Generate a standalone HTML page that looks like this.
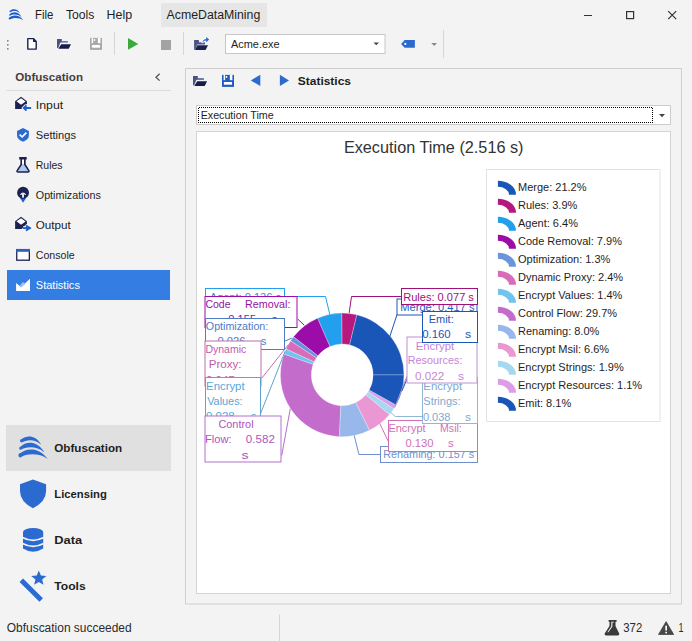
<!DOCTYPE html>
<html><head><meta charset="utf-8"><style>
html,body{margin:0;padding:0;background:#f3f3f3;width:692px;height:641px;overflow:hidden}
svg{display:block;font-family:"Liberation Sans",sans-serif}
</style></head><body>
<svg width="692" height="641" viewBox="0 0 692 641">
<rect x="0" y="0" width="692" height="641" fill="#f3f3f3"/>
<g transform="translate(8.7,9) scale(0.497,0.49) translate(-18.4,-436)"><path d="M21.8,439 C26,436 35,434 41.2,444.8 C35,438.6 26,439.6 21.8,442.6 A1.8,1.8 0 0 1 21.8,439 Z M20.85,446.5 C25.5,441.7 37,439.7 44.5,452.5 C37,445.5 25.5,446.5 20.85,449.8 A1.65,1.65 0 0 1 20.85,446.5 Z M20.65,453 C26,448.3 39,446.3 47.8,459.1 C39,452.5 26,453.5 20.65,457.5 A2.25,2.25 0 0 1 20.65,453 Z" fill="#1f5cc8"/></g>
<text x="35.00" y="18.70" font-size="12" fill="#1e1e1e" textLength="18.40" lengthAdjust="spacingAndGlyphs">File</text>
<text x="66.00" y="18.70" font-size="12" fill="#1e1e1e" textLength="28.40" lengthAdjust="spacingAndGlyphs">Tools</text>
<text x="106.60" y="18.70" font-size="12" fill="#1e1e1e" textLength="25.60" lengthAdjust="spacingAndGlyphs">Help</text>
<rect x="161" y="3" width="106" height="24" fill="#e6e6e6"/>
<text x="166.60" y="19.20" font-size="12" fill="#1e1e1e" textLength="93.70" lengthAdjust="spacingAndGlyphs">AcmeDataMining</text>
<line x1="584" y1="15.5" x2="592" y2="15.5" stroke="#333" stroke-width="1"/>
<rect x="626.6" y="11.6" width="7" height="7" fill="none" stroke="#333" stroke-width="1.2"/>
<path d="M668.2,11.2 L676.2,19.2 M676.2,11.2 L668.2,19.2" fill="none" stroke="#333" stroke-width="1.2"/>
<rect x="7" y="40" width="1.6" height="1.6" fill="#8a8a8a"/>
<rect x="7" y="44" width="1.6" height="1.6" fill="#8a8a8a"/>
<rect x="7" y="48" width="1.6" height="1.6" fill="#8a8a8a"/>
<path d="M27.8,38.6 L33.4,38.6 L36.2,41.6 L36.2,49.1 L27.8,49.1 Z" fill="#ffffff" stroke="#1b2250" stroke-width="1.4" stroke-linejoin="round"/>
<path d="M33,38.2 L33,41.9 L36.6,41.9 Z" fill="#1b2250"/>
<path d="M57,38.9 L61.8,38.9 L61.8,41.2 L67.9,41.2 L67.9,42.6 L60.4,42.6 L58.2,48.1 L57,48.1 Z" fill="#4b5385"/>
<path d="M61.2,44.2 L71.05,44.2 L68.7,48.8 L58.3,48.8 Z" fill="#141c4c"/>
<rect x="90" y="37.9" width="12" height="12" fill="#a9a9a9"/>
<rect x="91.6" y="37.9" width="1.5" height="5.3" fill="#ffffff"/>
<rect x="97.85" y="37.9" width="2.55" height="5.3" fill="#ffffff"/>
<rect x="93.8" y="39" width="1.4" height="1.9" fill="#ffffff"/>
<rect x="91.9" y="45" width="8.1" height="2.7" fill="#ffffff"/>
<line x1="114.5" y1="32" x2="114.5" y2="55" stroke="#d6d6d6" stroke-width="1"/>
<path d="M128,38 L138.3,43.9 L128,49.8 Z" fill="#3aab3a"/>
<rect x="161" y="40" width="10" height="10" fill="#a3a3a3"/>
<line x1="183.5" y1="32" x2="183.5" y2="55" stroke="#d6d6d6" stroke-width="1"/>
<path d="M194.1,40 L198.9,40 L198.9,42.3 L204.9,42.3 L204.9,44.6 L197.2,44.6 L195.2,49.8 L194.1,49.8 Z" fill="#4b5385"/>
<path d="M197.4,45.2 L208,45.2 L205.6,49.9 L195,49.9 Z" fill="#1b2250"/>
<path d="M202.2,42.5 Q203.2,39.2 206.2,39 L206.2,36.8 L209.2,39.6 L206.2,42.4 L206.2,40.6 Q204,40.6 202.2,42.5 Z" fill="none" stroke="#ffffff" stroke-width="1.6" stroke-linejoin="round" stroke-opacity="0.9"/>
<path d="M202.2,42.5 Q203.2,39.2 206.2,39 L206.2,36.8 L209.2,39.6 L206.2,42.4 L206.2,40.6 Q204,40.6 202.2,42.5 Z" fill="#2b6bd0"/>
<rect x="225.5" y="34.5" width="159.5" height="19" fill="#ffffff" stroke="#c7c7c7" stroke-width="1"/>
<text x="231.00" y="48.30" font-size="11.5" fill="#1e1e1e" textLength="48.60" lengthAdjust="spacingAndGlyphs">Acme.exe</text>
<path d="M373.5,42.5 L379,42.5 L376.25,45.3 Z" fill="#444"/>
<path d="M404.6,40.1 L414.9,40.1 L414.9,47.7 L404.6,47.7 L401.1,43.9 Z" fill="#2b6bd0"/>
<circle cx="405.3" cy="43.9" r="1.1" fill="#fff"/>
<path d="M431.2,43 L437,43 L434.1,46 Z" fill="#8a8a8a"/>
<line x1="443.5" y1="30" x2="443.5" y2="58" stroke="#d6d6d6" stroke-width="1"/>
<text x="15.30" y="81.40" font-size="11" font-weight="700" fill="#463e3e" textLength="67.70" lengthAdjust="spacingAndGlyphs">Obfuscation</text>
<path d="M159.6,73.8 L156,77.2 L159.6,80.6" fill="none" stroke="#555" stroke-width="1.3"/>
<line x1="6" y1="90.5" x2="171" y2="90.5" stroke="#dcdcdc" stroke-width="1"/>
<text x="35.80" y="108.90" font-size="11" fill="#1e1e1e" textLength="27.40" lengthAdjust="spacingAndGlyphs">Input</text>
<text x="35.80" y="138.70" font-size="11" fill="#1e1e1e" textLength="40.20" lengthAdjust="spacingAndGlyphs">Settings</text>
<text x="35.80" y="168.90" font-size="11" fill="#1e1e1e" textLength="26.80" lengthAdjust="spacingAndGlyphs">Rules</text>
<text x="35.80" y="198.90" font-size="11" fill="#1e1e1e" textLength="65.00" lengthAdjust="spacingAndGlyphs">Optimizations</text>
<text x="35.80" y="228.90" font-size="11" fill="#1e1e1e" textLength="35.00" lengthAdjust="spacingAndGlyphs">Output</text>
<text x="35.80" y="258.80" font-size="11" fill="#1e1e1e" textLength="38.90" lengthAdjust="spacingAndGlyphs">Console</text>
<rect x="7" y="270" width="163" height="30" fill="#347de2"/>
<text x="35.80" y="288.80" font-size="11" fill="#ffffff" textLength="44.10" lengthAdjust="spacingAndGlyphs">Statistics</text>
<path d="M21.06,96.8 L26.9,101.3 L26.9,103.6 L21.7,108.9 L15.1,108.9 L15.1,101.2 Z" fill="#1b2250"/>
<path d="M21.06,98.3 L25.6,101.5 L21.06,104.7 L16.5,101.35 Z" fill="#fff"/>
<path d="M26.5,105.3 L23.8,108 L26.5,110.7 M24.2,108 L31.1,108" fill="none" stroke="#ffffff" stroke-width="3.6" stroke-opacity="0.9"/>
<path d="M26.5,105.3 L23.8,108 L26.5,110.7 M24.2,108 L31.1,108" fill="none" stroke="#1f5ccc" stroke-width="1.9"/>
<path d="M23,128.1 L28.9,131.1 L28.9,135.6 Q28.9,139.6 23,141.8 Q17.06,139.6 17.06,135.6 L17.06,131.1 Z" fill="#2b6bd0"/>
<path d="M19.6,134.7 L22.1,136.8 L26.4,132.6" fill="none" stroke="#fff" stroke-width="1.7"/>
<path d="M19.2,157.1 L26.7,157.1 L26.7,159.5 L25.7,159.5 L25.7,164.3 L29.6,170.6 Q30.3,172.7 28,172.7 L18,172.7 Q15.7,172.7 16.4,170.6 L20.4,164.3 L20.4,159.5 L19.2,159.5 Z" fill="#1b2250"/>
<rect x="22.0" y="159.5" width="2.0" height="5.2" fill="#ffffff"/>
<path d="M22.0,164.7 L24.0,164.7 L28.3,171.3 L17.7,171.3 Z" fill="#b2c7f0"/>
<path d="M20,198 L26.1,198 L23.05,202.8 Z" fill="#2060d0"/>
<circle cx="23.05" cy="192.8" r="5.95" fill="#1b2250"/>
<path d="M19.9,194.7 Q23.05,190.2 26.3,194.7 L25.0,195.0 Q23.05,193.2 21.2,195.0 Z" fill="#e4e4ec"/>
<rect x="22.0" y="193.0" width="2.0" height="4.6" fill="#e4e4ec"/>
<path d="M21.06,216.8 L26.9,221.3 L26.9,223.6 L21.7,228.9 L15.1,228.9 L15.1,221.2 Z" fill="#1b2250"/>
<path d="M21.06,218.3 L25.6,221.5 L21.06,224.7 L16.5,221.35 Z" fill="#fff"/>
<path d="M23,228.1 L29.6,228.1 M26.3,225.3 L30.4,228.1 L26.3,230.9" fill="none" stroke="#ffffff" stroke-width="3.6" stroke-opacity="0.9"/>
<path d="M23,228.1 L29.6,228.1" fill="none" stroke="#1f5ccc" stroke-width="1.9"/>
<path d="M26.3,225.1 L31.2,228.1 L26.3,231.0 Z" fill="#1f5ccc" stroke="#1f5ccc" stroke-width="0.8" stroke-linejoin="round"/>
<rect x="16.75" y="249.6" width="12.6" height="10.6" fill="#ffffff" stroke="#1b2250" stroke-width="1.3"/>
<rect x="16.1" y="249" width="13.9" height="2.8" fill="#2a60c8"/>
<path d="M16.1,283 L21,286.9 L30,278.8 L30,291 L16.1,291 Z" fill="#fff"/>
<path d="M19.6,285.9 L22.8,281.9 L25.3,284.1 L21.2,287.6 Z" fill="#9fc0f0"/>
<rect x="6" y="425" width="165" height="46" fill="#e0e0e0"/>
<text x="54.30" y="452.00" font-size="11" font-weight="700" fill="#1e1e1e" textLength="67.90" lengthAdjust="spacingAndGlyphs">Obfuscation</text>
<text x="54.30" y="497.70" font-size="11" font-weight="700" fill="#1e1e1e" textLength="52.50" lengthAdjust="spacingAndGlyphs">Licensing</text>
<text x="54.30" y="544.00" font-size="11" font-weight="700" fill="#1e1e1e" textLength="27.90" lengthAdjust="spacingAndGlyphs">Data</text>
<text x="54.30" y="589.60" font-size="11" font-weight="700" fill="#1e1e1e" textLength="31.40" lengthAdjust="spacingAndGlyphs">Tools</text>
<path d="M21.8,439 C26,436 35,434 41.2,444.8 C35,438.6 26,439.6 21.8,442.6 A1.8,1.8 0 0 1 21.8,439 Z M20.85,446.5 C25.5,441.7 37,439.7 44.5,452.5 C37,445.5 25.5,446.5 20.85,449.8 A1.65,1.65 0 0 1 20.85,446.5 Z M20.65,453 C26,448.3 39,446.3 47.8,459.1 C39,452.5 26,453.5 20.65,457.5 A2.25,2.25 0 0 1 20.65,453 Z" fill="#2b6bd0"/>
<path d="M32.9,479.4 L46.1,484.3 L46.1,491 Q46.1,501.5 32.9,508.3 Q20,501.5 20,491 L20,484.3 Z" fill="#2b6bd0"/>
<path d="M23,532 A10.1,4 0 0 1 43.2,532 L43.2,548.5 Q33.1,554.9 23,548.5 Z" fill="#2b6bd0"/>
<path d="M22.5,537.5 Q33.1,543.1 43.7,537.5" fill="none" stroke="#f3f3f3" stroke-width="1.7"/>
<path d="M22.5,543.6 Q33.1,549.2 43.7,543.6" fill="none" stroke="#f3f3f3" stroke-width="1.7"/>
<line x1="21.3" y1="580.2" x2="41.2" y2="600.05" stroke="#2b6bd0" stroke-width="5.0"/>
<polygon points="38.80,570.40 40.86,575.57 46.41,575.93 42.13,579.48 43.50,584.87 38.80,581.90 34.10,584.87 35.47,579.48 31.19,575.93 36.74,575.57" fill="#2b6bd0"/>
<text x="6.80" y="631.80" font-size="12" fill="#2a2a2a" textLength="124.80" lengthAdjust="spacingAndGlyphs">Obfuscation succeeded</text>
<line x1="279.5" y1="614.5" x2="279.5" y2="641" stroke="#d6d6d6" stroke-width="1"/>
<path d="M608.6,620 L616.6,620 L616.6,621.7 L615.5,621.7 L615.5,626 L619.2,633.6 Q619.8,635.4 618,635.4 L605.8,635.4 Q604.1,635.4 604.7,633.6 L609.5,626 L609.5,621.7 L608.6,621.7 Z" fill="#3a3a3a"/>
<path d="M611.3,621.7 L613.9,621.7 L613.9,622.5 L612.4,622.5 L612.4,626.6 L608.4,632.2 L607.4,632.2 L611.3,626.2 Z" fill="#f3f3f3"/>
<text x="623.30" y="631.90" font-size="12" fill="#2a2a2a" textLength="18.90" lengthAdjust="spacingAndGlyphs">372</text>
<path d="M666.1,621.6 L673.7,634.5 L658.5,634.5 Z" fill="#474747" stroke="#474747" stroke-width="0.8" stroke-linejoin="round"/>
<rect x="665.3" y="625.7" width="1.7" height="4.8" fill="#fff"/>
<rect x="665.3" y="631.8" width="1.7" height="1.5" fill="#fff"/>
<text x="678.60" y="631.90" font-size="12" fill="#2a2a2a" textLength="5.00" lengthAdjust="spacingAndGlyphs">1</text>
<rect x="185.5" y="68.5" width="496" height="535.5" fill="none" stroke="#cfcfcf" stroke-width="1"/>
<path d="M193,76.0 L197.8,76.0 L197.8,78.30000000000001 L203.9,78.30000000000001 L203.9,79.7 L196.4,79.7 L194.2,85.2 L193,85.2 Z" fill="#4b5385"/>
<path d="M197.2,81.30000000000001 L207.05,81.30000000000001 L204.7,85.9 L194.3,85.9 Z" fill="#141c4c"/>
<rect x="222" y="74.9" width="12" height="12" fill="#1f5cc8"/>
<rect x="223.6" y="74.9" width="1.5" height="5.3" fill="#ffffff"/>
<rect x="229.85" y="74.9" width="2.55" height="5.3" fill="#ffffff"/>
<rect x="225.8" y="76" width="1.4" height="1.9" fill="#ffffff"/>
<rect x="223.9" y="82" width="8.1" height="2.7" fill="#ffffff"/>
<path d="M250.8,80.4 L260.3,74.8 L260.3,85.9 Z" fill="#2b6bd0"/>
<path d="M289,80.4 L279.9,74.8 L279.9,85.9 Z" fill="#2b6bd0"/>
<text x="297.80" y="85.20" font-size="11" font-weight="700" fill="#1e1e1e" textLength="53.20" lengthAdjust="spacingAndGlyphs">Statistics</text>
<rect x="196.5" y="105.5" width="474" height="19" fill="#ffffff" stroke="#cccccc" stroke-width="1"/>
<defs><pattern id="dots" patternUnits="userSpaceOnUse" x="0" y="0" width="2" height="2"><rect x="0" y="0" width="1" height="1" fill="#000"/><rect x="1" y="1" width="1" height="1" fill="#000"/></pattern></defs>
<rect x="198" y="107" width="455" height="1" fill="url(#dots)"/>
<rect x="198" y="122" width="455" height="1" fill="url(#dots)"/>
<rect x="198" y="107" width="1" height="16" fill="url(#dots)"/>
<rect x="652" y="107" width="1" height="16" fill="url(#dots)"/>
<path d="M659,114 L665,114 L662,117.2 Z" fill="#444"/>
<text x="200.70" y="118.60" font-size="11" fill="#1e1e1e" textLength="73.00" lengthAdjust="spacingAndGlyphs">Execution Time</text>
<rect x="196.5" y="131.5" width="474" height="462" fill="#ffffff" stroke="#d4d4d4" stroke-width="1"/>
<text x="343.90" y="153.10" font-size="16" fill="#333333" textLength="179.60" lengthAdjust="spacingAndGlyphs">Execution Time (2.516 s)</text>
<rect x="486.5" y="169.5" width="173.5" height="252" fill="#ffffff" stroke="#e3e3e3" stroke-width="1"/>
<path d="M497.9,180.79999999999998 A18.1,13.9 0 0 1 516.0,194.7 L509.0,194.7 A11.2,7.8 0 0 0 497.9,186.79999999999998 Z" fill="#1a56b8"/>
<text x="518.00" y="191.20" font-size="11" fill="#1e1e1e">Merge: 21.2%</text>
<path d="M497.9,198.79999999999998 A18.1,13.9 0 0 1 516.0,212.7 L509.0,212.7 A11.2,7.8 0 0 0 497.9,204.79999999999998 Z" fill="#b5197f"/>
<text x="518.00" y="209.20" font-size="11" fill="#1e1e1e">Rules: 3.9%</text>
<path d="M497.9,216.79999999999998 A18.1,13.9 0 0 1 516.0,230.7 L509.0,230.7 A11.2,7.8 0 0 0 497.9,222.79999999999998 Z" fill="#22a0ee"/>
<text x="518.00" y="227.20" font-size="11" fill="#1e1e1e">Agent: 6.4%</text>
<path d="M497.9,234.79999999999998 A18.1,13.9 0 0 1 516.0,248.7 L509.0,248.7 A11.2,7.8 0 0 0 497.9,240.79999999999998 Z" fill="#9c0ca8"/>
<text x="518.00" y="245.20" font-size="11" fill="#1e1e1e">Code Removal: 7.9%</text>
<path d="M497.9,252.79999999999998 A18.1,13.9 0 0 1 516.0,266.7 L509.0,266.7 A11.2,7.8 0 0 0 497.9,258.79999999999995 Z" fill="#6a94dc"/>
<text x="518.00" y="263.20" font-size="11" fill="#1e1e1e">Optimization: 1.3%</text>
<path d="M497.9,270.8 A18.1,13.9 0 0 1 516.0,284.7 L509.0,284.7 A11.2,7.8 0 0 0 497.9,276.8 Z" fill="#d86cb8"/>
<text x="518.00" y="281.20" font-size="11" fill="#1e1e1e">Dynamic Proxy: 2.4%</text>
<path d="M497.9,288.8 A18.1,13.9 0 0 1 516.0,302.7 L509.0,302.7 A11.2,7.8 0 0 0 497.9,294.8 Z" fill="#70c4ee"/>
<text x="518.00" y="299.20" font-size="11" fill="#1e1e1e">Encrypt Values: 1.4%</text>
<path d="M497.9,306.8 A18.1,13.9 0 0 1 516.0,320.7 L509.0,320.7 A11.2,7.8 0 0 0 497.9,312.8 Z" fill="#c46ccc"/>
<text x="518.00" y="317.20" font-size="11" fill="#1e1e1e">Control Flow: 29.7%</text>
<path d="M497.9,324.8 A18.1,13.9 0 0 1 516.0,338.7 L509.0,338.7 A11.2,7.8 0 0 0 497.9,330.8 Z" fill="#98b8ec"/>
<text x="518.00" y="335.20" font-size="11" fill="#1e1e1e">Renaming: 8.0%</text>
<path d="M497.9,342.8 A18.1,13.9 0 0 1 516.0,356.7 L509.0,356.7 A11.2,7.8 0 0 0 497.9,348.8 Z" fill="#ea98d4"/>
<text x="518.00" y="353.20" font-size="11" fill="#1e1e1e">Encrypt Msil: 6.6%</text>
<path d="M497.9,360.8 A18.1,13.9 0 0 1 516.0,374.7 L509.0,374.7 A11.2,7.8 0 0 0 497.9,366.8 Z" fill="#a6d8f2"/>
<text x="518.00" y="371.20" font-size="11" fill="#1e1e1e">Encrypt Strings: 1.9%</text>
<path d="M497.9,378.8 A18.1,13.9 0 0 1 516.0,392.7 L509.0,392.7 A11.2,7.8 0 0 0 497.9,384.8 Z" fill="#dc9ce8"/>
<text x="518.00" y="389.20" font-size="11" fill="#1e1e1e">Encrypt Resources: 1.1%</text>
<path d="M497.9,396.8 A18.1,13.9 0 0 1 516.0,410.7 L509.0,410.7 A11.2,7.8 0 0 0 497.9,402.8 Z" fill="#1a56b8"/>
<text x="518.00" y="407.20" font-size="11" fill="#1e1e1e">Emit: 8.1%</text>
<path d="M356.74,314.83 A61.8,61.8 0 0 1 404.00,374.90 L373.10,374.90 A30.9,30.9 0 0 0 349.47,344.87 Z" fill="#1a56b8" stroke="#ffffff" stroke-width="0.6" stroke-opacity="0.45"/>
<path d="M341.71,313.10 A61.8,61.8 0 0 1 356.74,314.83 L349.47,344.87 A30.9,30.9 0 0 0 341.96,344.00 Z" fill="#b5197f" stroke="#ffffff" stroke-width="0.6" stroke-opacity="0.45"/>
<path d="M317.54,318.23 A61.8,61.8 0 0 1 341.71,313.10 L341.96,344.00 A30.9,30.9 0 0 0 329.87,346.57 Z" fill="#22a0ee" stroke="#ffffff" stroke-width="0.6" stroke-opacity="0.45"/>
<path d="M293.51,336.84 A61.8,61.8 0 0 1 317.54,318.23 L329.87,346.57 A30.9,30.9 0 0 0 317.86,355.87 Z" fill="#9c0ca8" stroke="#ffffff" stroke-width="0.6" stroke-opacity="0.45"/>
<path d="M290.57,340.94 A61.8,61.8 0 0 1 293.51,336.84 L317.86,355.87 A30.9,30.9 0 0 0 316.38,357.92 Z" fill="#6a94dc" stroke="#ffffff" stroke-width="0.6" stroke-opacity="0.45"/>
<path d="M286.05,349.09 A61.8,61.8 0 0 1 290.57,340.94 L316.38,357.92 A30.9,30.9 0 0 0 314.12,362.00 Z" fill="#d86cb8" stroke="#ffffff" stroke-width="0.6" stroke-opacity="0.45"/>
<path d="M284.00,354.13 A61.8,61.8 0 0 1 286.05,349.09 L314.12,362.00 A30.9,30.9 0 0 0 313.10,364.51 Z" fill="#70c4ee" stroke="#ffffff" stroke-width="0.6" stroke-opacity="0.45"/>
<path d="M339.38,436.64 A61.8,61.8 0 0 1 284.00,354.13 L313.10,364.51 A30.9,30.9 0 0 0 340.79,405.77 Z" fill="#c46ccc" stroke="#ffffff" stroke-width="0.6" stroke-opacity="0.45"/>
<path d="M369.50,430.34 A61.8,61.8 0 0 1 339.38,436.64 L340.79,405.77 A30.9,30.9 0 0 0 355.85,402.62 Z" fill="#98b8ec" stroke="#ffffff" stroke-width="0.6" stroke-opacity="0.45"/>
<path d="M389.54,414.62 A61.8,61.8 0 0 1 369.50,430.34 L355.85,402.62 A30.9,30.9 0 0 0 365.87,394.76 Z" fill="#ea98d4" stroke="#ffffff" stroke-width="0.6" stroke-opacity="0.45"/>
<path d="M393.94,408.70 A61.8,61.8 0 0 1 389.54,414.62 L365.87,394.76 A30.9,30.9 0 0 0 368.07,391.80 Z" fill="#a6d8f2" stroke="#ffffff" stroke-width="0.6" stroke-opacity="0.45"/>
<path d="M396.15,405.04 A61.8,61.8 0 0 1 393.94,408.70 L368.07,391.80 A30.9,30.9 0 0 0 369.18,389.97 Z" fill="#dc9ce8" stroke="#ffffff" stroke-width="0.6" stroke-opacity="0.45"/>
<path d="M404.00,374.90 A61.8,61.8 0 0 1 396.15,405.04 L369.18,389.97 A30.9,30.9 0 0 0 373.10,374.90 Z" fill="#1a56b8" stroke="#ffffff" stroke-width="0.6" stroke-opacity="0.45"/>
<path d="M389.9,336.3 L397.0,314.6" fill="none" stroke="#1a56b8" stroke-width="1"/>
<path d="M349.2,312.9 L351.5,296.5 L401.1,296.5" fill="none" stroke="#a0107a" stroke-width="1"/>
<path d="M329.7,314.0 L325.5,296.5 L284.6,296.5" fill="none" stroke="#22a0ee" stroke-width="1"/>
<path d="M304.3,325.3 L297.7,319.0" fill="none" stroke="#9c0ca8" stroke-width="1"/>
<path d="M291.8,338.1 L284.7,341.3" fill="none" stroke="#4f7bc6" stroke-width="1"/>
<path d="M288.3,344.7 L261.6,378.4" fill="none" stroke="#c070ae" stroke-width="1"/>
<path d="M285.1,351.3 L260.4,414.0" fill="none" stroke="#5ea4cc" stroke-width="1"/>
<path d="M290.3,408.7 L281.7,455.5" fill="none" stroke="#b070c8" stroke-width="1"/>
<path d="M354.2,435.3 L358.9,454.5 L380.3,454.5" fill="none" stroke="#6f8fcc" stroke-width="1"/>
<path d="M379.8,423.6 L388.4,441.6" fill="none" stroke="#d070b0" stroke-width="1"/>
<path d="M390.8,412.6 L395.3,416.5 L422.3,416.5" fill="none" stroke="#90b8d4" stroke-width="1"/>
<path d="M394.8,407.4 L407.0,376.0" fill="none" stroke="#c090d4" stroke-width="1"/>
<path d="M401.9,391.0 L422.5,342.3" fill="none" stroke="#1a56b8" stroke-width="1"/>
<svg x="396" y="298" width="83" height="19" overflow="hidden"><g transform="translate(-396,-298)">
<rect x="397" y="299" width="80" height="16" fill="#ffffff" stroke="#1a56b8" stroke-width="1"/>
<text x="400.20" y="311.40" font-size="11" fill="#1f5cc0" textLength="74.40" lengthAdjust="spacingAndGlyphs">Merge: 0.417 s</text>
</g></svg>
<svg x="400" y="287" width="79" height="19" overflow="hidden"><g transform="translate(-400,-287)">
<rect x="401.5" y="288.5" width="76.0" height="16.0" fill="#ffffff" stroke="#a0107a" stroke-width="1"/>
<text x="403.20" y="300.50" font-size="11" fill="#a0107a" textLength="70.70" lengthAdjust="spacingAndGlyphs">Rules: 0.077 s</text>
</g></svg>
<svg x="204" y="287" width="82" height="19" overflow="hidden"><g transform="translate(-204,-287)">
<rect x="205.5" y="288.5" width="79.0" height="16.0" fill="#ffffff" stroke="#22a0ee" stroke-width="1"/>
<text x="209.70" y="300.50" font-size="11" fill="#2a8fd6" textLength="71.30" lengthAdjust="spacingAndGlyphs">Agent: 0.136 s</text>
</g></svg>
<svg x="204" y="295" width="95" height="34" overflow="hidden"><g transform="translate(-204,-295)">
<rect x="205" y="296.5" width="92" height="31.0" fill="#ffffff" stroke="#9c0ca8" stroke-width="1"/>
<text x="205.40" y="308.30" font-size="11" fill="#9510a2" textLength="25.20" lengthAdjust="spacingAndGlyphs">Code</text>
<text x="245.10" y="308.30" font-size="11" fill="#9510a2" textLength="45.30" lengthAdjust="spacingAndGlyphs">Removal:</text>
<text x="228.30" y="322.80" font-size="11" fill="#9510a2" textLength="27.90" lengthAdjust="spacingAndGlyphs">0.155</text>
<text x="271.70" y="322.80" font-size="11" fill="#9510a2" textLength="5.40" lengthAdjust="spacingAndGlyphs">s</text>
</g></svg>
<svg x="204" y="317" width="82" height="34" overflow="hidden"><g transform="translate(-204,-317)">
<rect x="205.5" y="318.5" width="79.0" height="31.0" fill="#ffffff" stroke="#4f7bc6" stroke-width="1"/>
<text x="205.80" y="329.90" font-size="11" fill="#4f7bc6" textLength="62.50" lengthAdjust="spacingAndGlyphs">Optimization:</text>
<text x="217.40" y="345.10" font-size="11" fill="#4f7bc6" textLength="28.00" lengthAdjust="spacingAndGlyphs">0.026</text>
<text x="260.80" y="345.10" font-size="11" fill="#4f7bc6" textLength="5.60" lengthAdjust="spacingAndGlyphs">s</text>
</g></svg>
<svg x="204" y="340" width="59" height="48" overflow="hidden"><g transform="translate(-204,-340)">
<rect x="205" y="341" width="56" height="45" fill="#ffffff" stroke="#c070ae" stroke-width="1"/>
<text x="205.40" y="353.20" font-size="11" fill="#c35aa8" textLength="40.90" lengthAdjust="spacingAndGlyphs">Dynamic</text>
<text x="208.70" y="368.40" font-size="11" fill="#c35aa8" textLength="32.90" lengthAdjust="spacingAndGlyphs">Proxy:</text>
<text x="206.10" y="383.70" font-size="11" fill="#c35aa8" textLength="28.50" lengthAdjust="spacingAndGlyphs">0.047</text>
<text x="250.90" y="383.70" font-size="11" fill="#c35aa8" textLength="5.20" lengthAdjust="spacingAndGlyphs">s</text>
</g></svg>
<svg x="204" y="376" width="58" height="49" overflow="hidden"><g transform="translate(-204,-376)">
<rect x="205.5" y="377.5" width="55.0" height="46.0" fill="#ffffff" stroke="#5ea4cc" stroke-width="1"/>
<text x="206.10" y="390.10" font-size="11" fill="#5aa6d6" textLength="38.50" lengthAdjust="spacingAndGlyphs">Encrypt</text>
<text x="207.20" y="404.80" font-size="11" fill="#5aa6d6" textLength="35.40" lengthAdjust="spacingAndGlyphs">Values:</text>
<text x="206.10" y="420.10" font-size="11" fill="#5aa6d6" textLength="28.50" lengthAdjust="spacingAndGlyphs">0.028</text>
<text x="250.90" y="420.10" font-size="11" fill="#5aa6d6" textLength="5.20" lengthAdjust="spacingAndGlyphs">s</text>
</g></svg>
<svg x="204" y="415" width="79" height="49" overflow="hidden"><g transform="translate(-204,-415)">
<rect x="205" y="416" width="76" height="46" fill="#ffffff" stroke="#b070c8" stroke-width="1"/>
<text x="218.40" y="428.20" font-size="11" fill="#ae55c0" textLength="35.20" lengthAdjust="spacingAndGlyphs">Control</text>
<text x="204.90" y="442.90" font-size="11" fill="#ae55c0" textLength="26.70" lengthAdjust="spacingAndGlyphs">Flow:</text>
<text x="245.80" y="442.90" font-size="11" fill="#ae55c0" textLength="29.10" lengthAdjust="spacingAndGlyphs">0.582</text>
<text x="241.40" y="459.30" font-size="11" fill="#ae55c0" textLength="7.10" lengthAdjust="spacingAndGlyphs">s</text>
</g></svg>
<svg x="379" y="445" width="100" height="19" overflow="hidden"><g transform="translate(-379,-445)">
<rect x="380.5" y="446.5" width="97.0" height="16.0" fill="#ffffff" stroke="#6f8fcc" stroke-width="1"/>
<text x="383.20" y="458.10" font-size="11" fill="#6f8fd0" textLength="91.00" lengthAdjust="spacingAndGlyphs">Renaming: 0.157 s</text>
</g></svg>
<svg x="387" y="419" width="92" height="34" overflow="hidden"><g transform="translate(-387,-419)">
<rect x="388.5" y="420.5" width="89.0" height="31.0" fill="#ffffff" stroke="#d070b0" stroke-width="1"/>
<text x="388.40" y="432.20" font-size="11" fill="#d070b8" textLength="37.20" lengthAdjust="spacingAndGlyphs">Encrypt</text>
<text x="440.00" y="432.20" font-size="11" fill="#d070b8" textLength="21.80" lengthAdjust="spacingAndGlyphs">Msil:</text>
<text x="405.50" y="446.90" font-size="11" fill="#d070b8" textLength="28.10" lengthAdjust="spacingAndGlyphs">0.130</text>
<text x="448.00" y="446.90" font-size="11" fill="#d070b8" textLength="5.70" lengthAdjust="spacingAndGlyphs">s</text>
</g></svg>
<svg x="421" y="376" width="58" height="49" overflow="hidden"><g transform="translate(-421,-376)">
<rect x="422.5" y="377.5" width="55.0" height="46.0" fill="#ffffff" stroke="#90b8d4" stroke-width="1"/>
<text x="423.30" y="390.00" font-size="11" fill="#7fa9d0" textLength="38.80" lengthAdjust="spacingAndGlyphs">Encrypt</text>
<text x="423.30" y="405.20" font-size="11" fill="#7fa9d0" textLength="37.30" lengthAdjust="spacingAndGlyphs">Strings:</text>
<text x="422.90" y="421.20" font-size="11" fill="#7fa9d0" textLength="27.60" lengthAdjust="spacingAndGlyphs">0.038</text>
<text x="464.90" y="421.20" font-size="11" fill="#7fa9d0" textLength="6.00" lengthAdjust="spacingAndGlyphs">s</text>
</g></svg>
<svg x="406" y="336" width="73" height="49" overflow="hidden"><g transform="translate(-406,-336)">
<rect x="407" y="337" width="70" height="46" fill="#ffffff" stroke="#c090d4" stroke-width="1"/>
<text x="415.70" y="349.60" font-size="11" fill="#c685d8" textLength="38.50" lengthAdjust="spacingAndGlyphs">Encrypt</text>
<text x="407.80" y="364.40" font-size="11" fill="#c685d8" textLength="54.60" lengthAdjust="spacingAndGlyphs">Resources:</text>
<text x="415.10" y="379.90" font-size="11" fill="#c685d8" textLength="29.10" lengthAdjust="spacingAndGlyphs">0.022</text>
<text x="457.90" y="379.90" font-size="11" fill="#c685d8" textLength="6.00" lengthAdjust="spacingAndGlyphs">s</text>
</g></svg>
<svg x="421" y="310" width="58" height="34" overflow="hidden"><g transform="translate(-421,-310)">
<rect x="422.5" y="311.5" width="55.0" height="31.0" fill="#ffffff" stroke="#1a56b8" stroke-width="1"/>
<text x="428.70" y="323.10" font-size="11" fill="#1a56b8" textLength="25.00" lengthAdjust="spacingAndGlyphs">Emit:</text>
<text x="422.20" y="338.30" font-size="11" fill="#1a56b8" textLength="28.50" lengthAdjust="spacingAndGlyphs">0.160</text>
<text x="465.10" y="338.30" font-size="11" fill="#1a56b8" textLength="6.10" lengthAdjust="spacingAndGlyphs">s</text>
</g></svg>
</svg>
</body></html>
